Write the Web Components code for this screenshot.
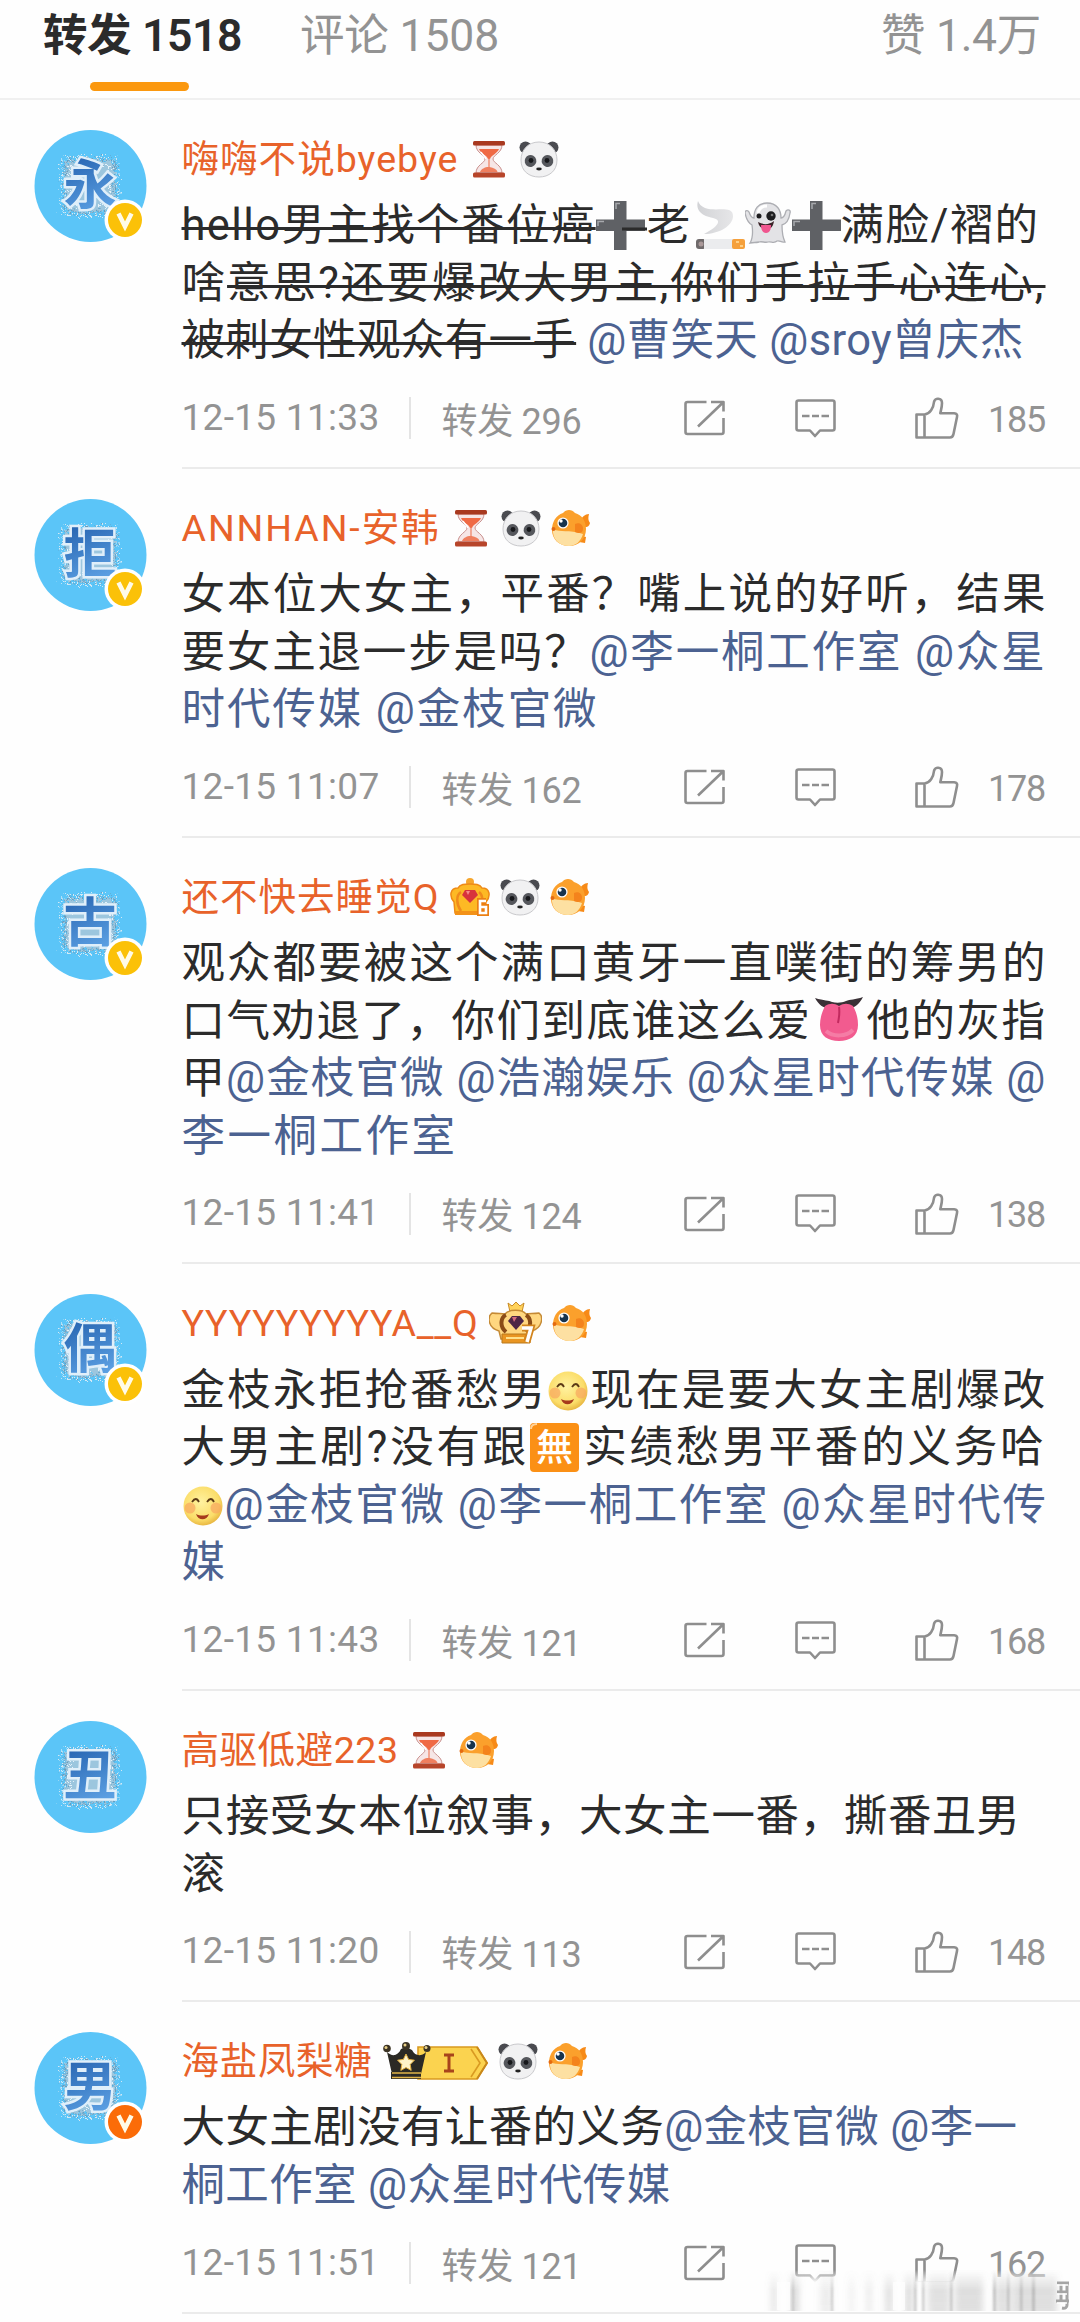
<!DOCTYPE html>
<html lang="zh-CN">
<head>
<meta charset="UTF-8">
<title>转发</title>
<style>
    body {
        margin: 0;
        width: 1080px;
        height: 2322px;
        overflow: hidden;
        background: #fefefe;
        color: #2b2b2b;
        font-family: Roboto, "Noto Sans CJK SC", sans-serif;
    }

    .at {
        color: #4c6291;
    }

    /* the strike sits lower than line-through would put it */
    s {
        text-decoration: underline 3px;
        text-underline-offset: -13px;
        text-decoration-skip-ink: none;
    }
</style>
</head>
<body>
<repost-feed>
    <feed-tabs slot="tabs">
        <fit-text slot="active" width="199">转发 1518</fit-text>
        <fit-text slot="comments" width="199">评论 1508</fit-text>
        <fit-text slot="likes" width="160">赞 1.4万</fit-text>
    </feed-tabs>

    <feed-post glyph="永" badge="#fbc108" reposts="296" time="12-15 11:33" likes="185">
        <fit-text slot="name" width="277">嗨嗨不说byebye</fit-text>
        <inline-icon slot="name" kind="hourglass"></inline-icon>
        <inline-icon slot="name" kind="panda"></inline-icon>
        <fit-text width="858"><s>hello男主找个番位癌</s><inline-icon kind="plusStruck"></inline-icon>老<inline-icon kind="smoke"></inline-icon><inline-icon kind="ghost"></inline-icon><inline-icon kind="plus"></inline-icon>满脸/褶的</fit-text>
        <fit-text width="864">啥<s>意思?还要爆改大男主,你们手拉手心连心,</s></fit-text>
        <fit-text width="842"><s>被刺女性观众有一手</s> <span class="at">@曹笑天 @sroy曾庆杰</span></fit-text>
    </feed-post>

    <feed-post glyph="拒" badge="#fbc108" reposts="162" time="12-15 11:07" likes="178">
        <fit-text slot="name" width="259">ANNHAN-安韩</fit-text>
        <inline-icon slot="name" kind="hourglass"></inline-icon>
        <inline-icon slot="name" kind="panda"></inline-icon>
        <inline-icon slot="name" kind="fish"></inline-icon>
        <fit-text width="866">女本位大女主，平番？嘴上说的好听，结果</fit-text>
        <fit-text width="865">要女主退一步是吗？<span class="at">@李一桐工作室 @众星</span></fit-text>
        <fit-text width="417"><span class="at">时代传媒 @金枝官微</span></fit-text>
    </feed-post>

    <feed-post glyph="古" badge="#fbc108" reposts="124" time="12-15 11:41" likes="138">
        <fit-text slot="name" width="258">还不快去睡觉Q</fit-text>
        <inline-icon slot="name" kind="crown6"></inline-icon>
        <inline-icon slot="name" kind="panda"></inline-icon>
        <inline-icon slot="name" kind="fish"></inline-icon>
        <fit-text width="866">观众都要被这个满口黄牙一直噗街的筹男的</fit-text>
        <fit-text width="865">口气劝退了，你们到底谁这么爱<inline-icon kind="tongue"></inline-icon>他的灰指</fit-text>
        <fit-text width="865">甲<span class="at">@金枝官微 @浩瀚娱乐 @众星时代传媒 @</span></fit-text>
        <fit-text width="276"><span class="at">李一桐工作室</span></fit-text>
    </feed-post>

    <feed-post glyph="偶" badge="#fbc108" reposts="121" time="12-15 11:43" likes="168">
        <fit-text slot="name" width="297">YYYYYYYYYA__Q</fit-text>
        <inline-icon slot="name" kind="crown7"></inline-icon>
        <inline-icon slot="name" kind="fish"></inline-icon>
        <fit-text width="866">金枝永拒抢番愁男<inline-icon kind="smile"></inline-icon>现在是要大女主剧爆改</fit-text>
        <fit-text width="865">大男主剧?没有跟<inline-icon kind="mu"></inline-icon>实绩愁男平番的义务哈</fit-text>
        <fit-text width="866"><inline-icon kind="smile"></inline-icon><span class="at">@金枝官微 @李一桐工作室 @众星时代传</span></fit-text>
        <fit-text><span class="at">媒</span></fit-text>
    </feed-post>

    <feed-post glyph="丑" reposts="113" time="12-15 11:20" likes="148">
        <fit-text slot="name" width="217">高驱低避223</fit-text>
        <inline-icon slot="name" kind="hourglass"></inline-icon>
        <inline-icon slot="name" kind="fish"></inline-icon>
        <fit-text width="839">只接受女本位叙事，大女主一番，撕番丑男</fit-text>
        <fit-text>滚</fit-text>
    </feed-post>

    <feed-post glyph="男" badge="#fb6c08" reposts="121" time="12-15 11:51" likes="162">
        <fit-text slot="name" width="191">海盐凤梨糖</fit-text>
        <inline-icon slot="name" kind="crownTag"></inline-icon>
        <inline-icon slot="name" kind="panda"></inline-icon>
        <inline-icon slot="name" kind="fish"></inline-icon>
        <fit-text width="836">大女主剧没有让番的义务<span class="at">@金枝官微 @李一</span></fit-text>
        <fit-text width="489"><span class="at">桐工作室 @众星时代传媒</span></fit-text>
    </feed-post>

    <corner-smear slot="overlay"></corner-smear>
</repost-feed>

<script>
// Small pictures used beside names and inside the text: [width, height, baseline shift, svg body]
const PICTURES = {
    hourglass: [40, 38, -6, `
        <path d="M7 5h26c0 8-9 10-9 14s9 6 9 14H7c0-8 9-10 9-14S7 13 7 5z" fill="#f6e6e6" stroke="#c98f8c" stroke-width="1"/>
        <path d="M10 9h20c-2 5-8 6-9 10h-2c-1-4-7-5-9-10z" fill="#ef6a45"/>
        <path d="M19.4 18h1.2v9c4 1 7 2 8 5H11c1-3 5-5 8.4-5z" fill="#ef7f5f"/>
        <path d="M12 12c2 4 4 4 5 7" fill="none" stroke="#fff" stroke-width="1.5"/>
        <rect x="4" y="1" width="32" height="4.5" rx="1.5" fill="#a9391f"/>
        <rect x="4" y="32.5" width="32" height="5" rx="1.5" fill="#b7452a"/>`],
    panda: [40, 38, -6, `
        <circle cx="6.5" cy="7.5" r="6" fill="#4a4b50"/><circle cx="33.5" cy="7.5" r="6" fill="#4a4b50"/>
        <path d="M20 2C31 2 38 10 38 20c0 11-8 17-18 17S2 31 2 20C2 10 9 2 20 2z" fill="#f1f1f2" stroke="#c9c9cc"/>
        <ellipse cx="11.5" cy="21" rx="5.8" ry="6" fill="#55575c" transform="rotate(28 11.5 21)"/>
        <ellipse cx="28.5" cy="21" rx="5.8" ry="6" fill="#55575c" transform="rotate(-28 28.5 21)"/>
        <circle cx="12" cy="20.5" r="2.4" fill="#17181b"/><circle cx="28" cy="20.5" r="2.4" fill="#17181b"/>
        <ellipse cx="20" cy="29" rx="2.8" ry="1.4" fill="#222"/>`],
    fish: [40, 38, -6, `
        <path d="M29 12c2-4 5-7 9-7-1 4-1 6 1 9-1 4-3 4-5 4z" fill="#f78a17"/>
        <path d="M31 27l4 1-1 6-6-1z" fill="#f78a17"/>
        <path d="M12 4C15 0 21 0 24 4c7 2 11 8 11 16 0 10-7 17-17 17S1 30 1 21C1 13 5 6 12 4z" fill="#fba02c"/>
        <path d="M2 20c8 4 15 0 30 5-2 7-7 12-14 12C8 37 1 30 2 20z" fill="#fde0a2"/>
        <path d="M24 15c5-2 8 1 8 5s-4 5-8 3z" fill="#f4831c"/>
        <circle cx="12" cy="14" r="5.6" fill="#fff"/><circle cx="12" cy="14" r="4.3" fill="#17334d"/>
        <circle cx="10" cy="12" r="1.7" fill="#fff"/><circle cx="2.5" cy="20" r="2" fill="#e46a10"/>`],
    crown6: [40, 38, -6, `
        <circle cx="20" cy="4" r="4" fill="#f6a62c"/>
        <path d="M5 35L4 24C-1 18 0 10 8 10c2-4 7-4 12-4s10 0 12 4c8 0 9 8 4 14l-1 11z" fill="#fdb924" stroke="#ee8a16" stroke-width="1.5"/>
        <path d="M11 33C6 26 6 17 11 14M29 33c5-7 4-16 0-19" fill="none" stroke="#f08a1b" stroke-width="2.5"/>
        <path d="M15 12h10l3 5-8 8-8-8z" fill="#d8333c"/><path d="M16 13h4l-2 4z" fill="#f58a8a"/>
        <path d="M5 33h24v4H5z" fill="#f39218"/>
        <path d="M36 23h-6v12h6v-6h-5" fill="none" stroke="#ec7f12" stroke-width="6"/>
        <path d="M36 23h-6v12h6v-6h-5" fill="none" stroke="#fff" stroke-width="2.6"/>`],
    crown7: [53, 42, -9, `
        <path d="M19 1l4 3 4-4 4 4 4-3-2 9H21z" fill="#ffd25a" stroke="#c88a25"/>
        <path d="M12 37l-2-8C-1 26-2 15 3 11c7 1 9 0 13 1 4-5 17-5 21 0 4-1 7 0 13-1 5 4 3 15-7 18l-2 8z" fill="#ffd780" stroke="#c58a35" stroke-width="1.5"/>
        <path d="M17 30C10 24 12 15 17 13M37 30c6-6 5-14 0-17" fill="none" stroke="#8b4c17" stroke-width="4"/>
        <path d="M23 14h8l4 5-8 9-8-9z" fill="#4d2545"/><path d="M23 15h5l-3 5z" fill="#d36a7c"/>
        <path d="M13 32h28v9H13z" fill="#e99521" stroke="#b9781d"/><path d="M17 36h18" stroke="#ffe08a" stroke-width="2"/>
        <path d="M33 26h9l-4 14" fill="none" stroke="#d2841d" stroke-width="7"/>
        <path d="M33 26h9l-4 14" fill="none" stroke="#fff" stroke-width="3.5"/>`],
    crownTag: [105, 38, -6, `
        <path d="M35 5h59l10 16-10 16H35z" fill="#fbd34f" stroke="#d99a21" stroke-width="1.6"/>
        <path d="M88 7l9 14-9 14" fill="none" stroke="#d99a21" stroke-width="1.6"/>
        <path d="M94 5l10 16-10 16" fill="none" stroke="#c9881a" stroke-width="2"/>
        <path d="M61 13h10M61 29h10M66 13v16" stroke="#a8441b" stroke-width="3"/>
        <path d="M9 32L4 10c5 5 11 4 14-3l5-2 6 3c3 6 9 7 14 2l-5 22z" fill="#2b2924"/>
        <path d="M8 30h30v7H8z" fill="#2b2924"/><path d="M9 31h29M9 35.5h29" stroke="#e0b448" stroke-width="1.3"/>
        <circle cx="4" cy="6.5" r="3.8" fill="#3b3324"/><circle cx="23" cy="4" r="4" fill="#3b3324"/><circle cx="44" cy="6.5" r="3.5" fill="#3b3324"/>
        <circle cx="3" cy="5.5" r="1.5" fill="#e8cf86"/><circle cx="22" cy="3" r="1.5" fill="#e8cf86"/><circle cx="43" cy="5.5" r="1.5" fill="#e8cf86"/>
        <path d="M23 12l2.6 5.4 5.8.8-4.2 4.2 1 6L23 25.6l-5.2 2.8 1-6-4.2-4.2 5.8-.8z" fill="#fff3c9" stroke="#e2ad3b"/>`],
    plus: [49, 49, -10, `
        <path d="M18 0h12.5v18.5H49V30H30.5v19H18V30H0V18.5h18z" fill="#5f6165"/>
        <path d="M20 8V2.5h4M2 25v-4.5h6" fill="none" stroke="#a7a9ad" stroke-width="1.5"/>`],
    smoke: [53, 49, -10, `
        <defs><linearGradient id="g"><stop offset="0" stop-color="#d2d3d6"/><stop offset="1" stop-color="#e6e6e8"/></linearGradient></defs>
        <path d="M6 0c-3 10 5 15 15 17 9 2 6 8-9 16 15 0 29-8 29-18C41 4 24 11 13 7 9 5 7 3 6 0z" fill="url(#g)"/>
        <rect x="4" y="38" width="10" height="10" rx="3" fill="#6f6a6b"/><circle cx="9" cy="43" r="2.5" fill="#a99"/>
        <rect x="12" y="38" width="30" height="10" fill="#ebecee"/><rect x="40" y="38" width="13" height="10" rx="2" fill="#f5a03c"/>
        <path d="M44 41h3M48 45h3" stroke="#ffd085" stroke-width="2"/>`],
    ghost: [47, 49, -10, `
        <path d="M22 2c10 0 14 7 14 15 3 0 4-3 5-7 2-2 5-1 4 2-1 7-4 11-8 12 0 7 1 13 3 17-4 1-5-2-8-1-3 3-6 0-9 1-3 1-6-1-9 0-4 1-5 0-9 1 3-5 3-11 2-18C3 22 1 17 0 12c0-3 3-3 4-1 1 3 3 6 5 6C9 8 13 2 22 2z" fill="#e3e3e6" stroke="#adaeb3" stroke-width="1.3"/>
        <path d="M13 12c1-5 5-7 9-7" fill="none" stroke="#fff" stroke-width="3"/>
        <circle cx="14" cy="15" r="2.5" fill="#1d1d1f"/><circle cx="26" cy="15" r="4.7" fill="#1d1d1f"/><circle cx="27" cy="14" r="1.3" fill="#777"/>
        <path d="M13 21c5 3 11 3 16-1-1 7-4 8-8 8s-7-2-8-7z" fill="#3a2127"/><path d="M16 24h10c0 4-1 8-5 8s-5-4-5-8z" fill="#f0568f"/>`],
    tongue: [55, 49, -7, `
        <path d="M3 4c9 3 14 2 17 4 4 1 10 1 14-1 4-2 9-1 17-4-4 8-9 11-14 11H17C11 14 7 11 3 4z" fill="#3a3136"/>
        <path d="M13 12c5-3 9-3 14 0 5-3 9-3 14 0 4 7 5 13 5 19 0 11-8 16-19 16S8 42 8 31c0-7 2-13 5-19z" fill="#f25b8f"/>
        <path d="M27 13c1 6 0 11-1 16" fill="none" stroke="#c22a5f" stroke-width="2"/>
        <path d="M14 37c7 6 20 6 27-1" fill="none" stroke="#f57ca5" stroke-width="4"/>`],
    smile: [43, 40, -6, `
        <defs><radialGradient id="g" cx=".45" cy=".4" r=".6"><stop offset="0" stop-color="#fff2a0"/><stop offset=".75" stop-color="#fbdd69"/><stop offset="1" stop-color="#e9b843"/></radialGradient></defs>
        <circle cx="21" cy="20" r="19.5" fill="url(#g)"/>
        <circle cx="8" cy="22" r="5.5" fill="#f8a75f" opacity=".7"/><circle cx="34" cy="22" r="5.5" fill="#f8a75f" opacity=".7"/>
        <path d="M10 16q4-6 7 0M25 16q4-6 7 0" fill="none" stroke="#5c3a16" stroke-width="1.8"/>
        <path d="M14 28c4 2 9 2 13 0-2 7-11 7-13 0z" fill="#a63a1c"/>`],
    mu: [54, 49, -10, `
        <rect x="1" y="0" width="49" height="49" rx="4" fill="#fb9015"/><path d="M2 6q0-5 6-5" fill="none" stroke="#ffd39a" stroke-width="2"/>
        <text x="25.5" y="38" font-size="37" font-weight="500" fill="#fff" text-anchor="middle">無</text>`]
};
PICTURES.plusStruck = [51, 49, -10, PICTURES.plus[3] + '<path d="M26 28h27" stroke="#2b2b2b" stroke-width="3"/>'];

class InlineIcon extends HTMLElement {
    connectedCallback() {
        if (!this.shadowRoot) {
            this.attachShadow({ mode: 'open' });
        }
        const [w, h, shift, body] = PICTURES[this.getAttribute('kind')];
        this.shadowRoot.innerHTML = `
            <style>
                :host {
                    display: inline-block;
                    width: ${w}px;
                    height: ${h}px;
                    vertical-align: ${shift}px;
                    letter-spacing: 0;
                }

                svg {
                    display: block;
                }
            </style>
            <svg width="${w}" height="${h}" viewBox="0 0 ${w} ${h}">${body}</svg>
        `;
    }
}

// One line of text whose letter spacing is set so that it fills the given width
class FitText extends HTMLElement {
    connectedCallback() {
        if (!this.shadowRoot) {
            this.attachShadow({ mode: 'open' });
        }
        this.shadowRoot.innerHTML = `
            <style>
                :host {
                    display: block;
                    white-space: nowrap;
                }
            </style>
            <span><slot></slot></span>
        `;
        const width = Number(this.getAttribute('width'));
        if (!width) return;
        this.style.width = `${width}px`;
        const natural = this.shadowRoot.querySelector('span').getBoundingClientRect().width;
        const count = [...this.textContent].length;
        this.style.letterSpacing = `${(width - natural) / count}px`;
    }
}

class FeedTabs extends HTMLElement {
    connectedCallback() {
        if (!this.shadowRoot) {
            this.attachShadow({ mode: 'open' });
        }
        this.shadowRoot.innerHTML = `
            <style>
                :host {
                    display: flex;
                    box-sizing: border-box;
                    height: 100px;
                    padding: 0 39px 0 43px;
                    border-bottom: 2px solid #f0f0f0;
                    font-size: 44.5px;
                    line-height: 73px;
                    color: #939393;
                }

                .active {
                    display: flex;
                    flex-direction: column;
                    align-items: center;
                    margin-right: 58px;
                    color: #2b2b2b;
                    font-weight: 600;
                }

                .bar {
                    width: 99px;
                    height: 9px;
                    margin-top: 9px;
                    margin-right: 6px;
                    border-radius: 5px;
                    background: #fb980f;
                }

                .likes {
                    margin-left: auto;
                }
            </style>
            <div class="active"><slot name="active"></slot><div class="bar"></div></div>
            <slot name="comments"></slot>
            <div class="likes"><slot name="likes"></slot></div>
        `;
    }
}

class UserAvatar extends HTMLElement {
    connectedCallback() {
        if (!this.shadowRoot) {
            this.attachShadow({ mode: 'open' });
        }
        const badge = this.getAttribute('badge');
        this.shadowRoot.innerHTML = `
            <style>
                :host {
                    display: block;
                    width: 113px;
                    height: 113px;
                }

                svg {
                    display: block;
                }

                text {
                    font-family: "Noto Sans CJK SC", sans-serif;
                    font-weight: 700;
                    font-size: 53px;
                }
            </style>
            <svg width="113" height="113" viewBox="0 0 113 113">
                <defs>
                    <linearGradient id="ink" x1="0" y1="0" x2="0.3" y2="1">
                        <stop offset="0" stop-color="#1a56a5"/>
                        <stop offset="1" stop-color="#5b9fe2"/>
                    </linearGradient>
                    <filter id="rough" x="-20%" y="-20%" width="140%" height="140%">
                        <feTurbulence type="fractalNoise" baseFrequency="0.45" numOctaves="2" seed="4"/>
                        <feDisplacementMap in="SourceGraphic" scale="14" xChannelSelector="R" yChannelSelector="G"/>
                    </filter>
                </defs>
                <circle cx="56.5" cy="56" r="56" fill="#5bc5f8"/>
                <g filter="url(#rough)" fill="none">
                    <rect x="31" y="30" width="50" height="52" rx="6" fill="#9cc6de" stroke="#6a9dbd" stroke-width="3" stroke-dasharray="2 3"/>
                    <rect x="28" y="27" width="56" height="58" rx="8" stroke="#d3e9f5" stroke-width="2" stroke-dasharray="2 3"/>
                    <rect x="36" y="36" width="40" height="40" stroke="#e3f1f9" stroke-width="2" stroke-dasharray="3 3"/>
                </g>
                <text x="56" y="74" text-anchor="middle" fill="url(#ink)" stroke="#e0effa" stroke-width="5" paint-order="stroke">${this.getAttribute('glyph')}</text>
                ${badge ? `
                <circle cx="91" cy="90" r="20.5" fill="#fff"/>
                <circle cx="91" cy="90" r="17" fill="${badge}"/>
                <path d="M84.5 83.5l6.5 13 6.5-13" fill="none" stroke="#fffbe8" stroke-width="4.5"/>` : ''}
            </svg>
        `;
    }
}

class FeedPost extends HTMLElement {
    connectedCallback() {
        if (!this.shadowRoot) {
            this.attachShadow({ mode: 'open' });
        }
        const get = (name) => this.getAttribute(name);
        this.shadowRoot.innerHTML = `
            <style>
                :host {
                    display: grid;
                    grid-template-columns: 147.5px 1fr;
                    padding-left: 34px;
                }

                user-avatar {
                    margin-top: 30px;
                }

                .name {
                    display: flex;
                    align-items: center;
                    gap: 10px;
                    height: 50px;
                    margin-top: 34px;
                    font-size: 37.5px;
                    line-height: 50px;
                    color: #e8622a;
                }

                .body {
                    margin-top: 13.2px;
                    font-size: 43.5px;
                    line-height: 57.5px;
                }

                .foot {
                    display: grid;
                    grid-template-columns: 227px 33px 242px 111px 120px 1fr;
                    align-items: center;
                    box-sizing: border-box;
                    height: 99.27px;
                    padding-right: 35px;
                    font-size: 36px;
                    line-height: 50px;
                    color: #939393;
                    border-bottom: 2px solid #ebebeb;
                }

                .time {
                    padding-bottom: 1px;
                    font-size: 37px;
                }

                .sep {
                    width: 2px;
                    height: 42px;
                    background: #e4e4e4;
                }

                .reposts {
                    padding-top: 7px;
                }

                .likes {
                    display: flex;
                    align-items: center;
                    justify-content: space-between;
                }

                .count {
                    padding-top: 3px;
                }

                svg {
                    display: block;
                    fill: none;
                    stroke: #8e8e8e;
                    stroke-width: 2.6;
                    stroke-linejoin: round;
                }
            </style>
            <user-avatar glyph="${get('glyph')}" ${get('badge') ? `badge="${get('badge')}"` : ''}></user-avatar>
            <div class="main">
                <div class="name"><slot name="name"></slot></div>
                <div class="body"><slot></slot></div>
                <div class="foot">
                    <fit-text class="time" width="198">${get('time')}</fit-text>
                    <div class="sep"></div>
                    <fit-text class="reposts" width="140">转发 ${get('reposts')}</fit-text>
                    <svg width="41" height="36" viewBox="0 0 41 36"><path d="M22.5 2H3.5Q1.5 2 1.5 4v28q0 2 2 2h34q2 0 2-2V18M27 2h12.5v9.5M39 2.5l-25 24"/></svg>
                    <svg width="41" height="39" viewBox="0 0 41 39"><path d="M3.5 1.5h34q2 0 2 2v26q0 2-2 2H25l-5 5.5-5-5.5H3.5q-2 0-2-2v-26q0-2 2-2zM7 17h7.5M17 17h7M26.5 17H34"/></svg>
                    <div class="likes">
                        <svg width="44" height="42" viewBox="0 0 44 42"><path d="M9.5 17.5C15 17 18.5 11 19 5c.5-4.5 8-4.5 8 1 0 4-1 7-1.7 10.2H39c3 .3 3.5 1.8 3 3.8l-3.5 17c-.5 2.5-1.5 3.5-3.5 3.5H1.5v-23zM9.5 17.5v23"/></svg>
                        <fit-text class="count" width="57">${get('likes')}</fit-text>
                    </div>
                </div>
            </div>
        `;
    }
}

// Vertical smear over the last row's lower right corner
class CornerSmear extends HTMLElement {
    connectedCallback() {
        if (!this.shadowRoot) {
            this.attachShadow({ mode: 'open' });
        }
        // [x, width, opacity]
        const soft = [[8, 6, .3], [27, 9, .4], [57, 12, .2], [86, 5, .18], [103, 6, .22], [122, 8, .35], [142, 8, .4], [165, 22, .35], [192, 28, .38], [232, 16, .35], [250, 44, .38]];
        const sharp = [[29, 2, .5], [68, 2, .6], [151, 2.5, .6], [159, 2.5, .6], [187, 2.5, .6], [230, 3, .6], [244, 2.5, .55], [257, 2.5, .55], [269, 3, .6]];
        const draw = (bars) => bars.map(([x, w, o]) => `<rect x="${x}" y="0" width="${w}" height="41" fill="url(#bar)" opacity="${o}"/>`).join('');
        this.shadowRoot.innerHTML = `
            <style>
                :host {
                    position: absolute;
                    left: 763px;
                    top: 2270px;
                    display: block;
                }

                svg {
                    display: block;
                }
            </style>
            <svg width="310" height="42" viewBox="0 0 310 42">
                <defs>
                    <linearGradient id="veil" x1="0" y1="0" x2="0" y2="1">
                        <stop offset="0" stop-color="#fefefe" stop-opacity="0"/>
                        <stop offset=".3" stop-color="#fefefe"/>
                    </linearGradient>
                    <linearGradient id="bar" x1="0" y1="0" x2="0" y2="1">
                        <stop offset="0" stop-color="#8f8f8f" stop-opacity="0"/>
                        <stop offset=".5" stop-color="#8f8f8f" stop-opacity=".75"/>
                        <stop offset="1" stop-color="#8f8f8f" stop-opacity=".7"/>
                    </linearGradient>
                    <filter id="wide" x="-5%" width="110%" y="0" height="100%"><feGaussianBlur stdDeviation="3 0"/></filter>
                    <filter id="thin" x="-5%" width="110%" y="0" height="100%"><feGaussianBlur stdDeviation=".8 0"/></filter>
                </defs>
                <rect width="304" height="42" fill="url(#veil)"/>
                <g filter="url(#wide)">${draw(soft)}</g>
                <g filter="url(#thin)">${draw(sharp)}</g>
                <rect x="14" y="12" width="13" height="28" fill="#fefefe" opacity=".8"/>
                <rect x="130" y="12" width="12" height="28" fill="#fefefe" opacity=".8"/>
                <path d="M294 13h12M294 22h11M293 31h13M304 13v22q0 4-5 3M298 13v18" fill="none" stroke="#a5a5a5" stroke-width="3"/>
                <path d="M294 15h11M294 24h10M294 33h10" fill="none" stroke="#fff" stroke-width="1.5"/>
            </svg>
        `;
    }
}

class RepostFeed extends HTMLElement {
    connectedCallback() {
        if (!this.shadowRoot) {
            this.attachShadow({ mode: 'open' });
        }
        this.shadowRoot.innerHTML = `
            <style>
                :host {
                    display: block;
                    position: relative;
                    height: 2322px;
                }
            </style>
            <slot name="tabs"></slot>
            <slot></slot>
            <slot name="overlay"></slot>
        `;
    }
}

// fit-text measures itself, so everything around it has to be in place first
customElements.define('repost-feed', RepostFeed);
customElements.define('inline-icon', InlineIcon);
customElements.define('user-avatar', UserAvatar);
customElements.define('feed-tabs', FeedTabs);
customElements.define('feed-post', FeedPost);
customElements.define('corner-smear', CornerSmear);
customElements.define('fit-text', FitText);
</script>
</body>
</html>
